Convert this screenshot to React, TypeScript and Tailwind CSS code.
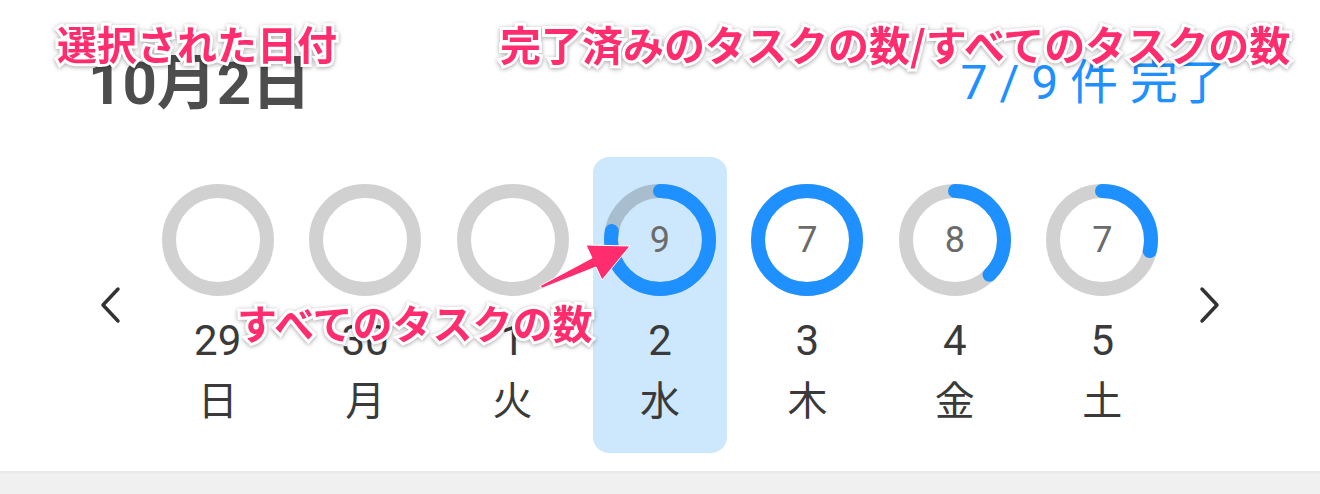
import React from "react";

type Day = {
  date: number;
  weekday: string;
  total: number;
  done: number;
  selected?: boolean;
};

const days: Day[] = [
  { date: 29, weekday: "日", total: 0, done: 0 },
  { date: 30, weekday: "月", total: 0, done: 0 },
  { date: 1, weekday: "火", total: 0, done: 0 },
  { date: 2, weekday: "水", total: 9, done: 7, selected: true },
  { date: 3, weekday: "木", total: 7, done: 7 },
  { date: 4, weekday: "金", total: 8, done: 3 },
  { date: 5, weekday: "土", total: 7, done: 2 },
];

const FONT = "[font-family:Roboto,'Noto_Sans_CJK_JP',sans-serif]";

function ProgressRing({ total, done }: { total: number; done: number }) {
  const r = 49;
  const c = 2 * Math.PI * r;
  const frac = total > 0 ? done / total : 0;
  return (
    <div className="relative h-[112px] w-[112px]">
      <svg width={112} height={112} viewBox="0 0 112 112" className="-rotate-90">
        <circle cx={56} cy={56} r={r} fill="none" stroke="rgba(0,0,0,0.18)" strokeWidth={14} />
        {frac > 0 && (
          <circle
            cx={56}
            cy={56}
            r={r}
            fill="none"
            stroke="#1e90ff"
            strokeWidth={14}
            strokeLinecap={frac >= 1 ? "butt" : "round"}
            strokeDasharray={`${frac * c} ${c}`}
          />
        )}
      </svg>
      {total > 0 && (
        <span className="absolute inset-0 flex items-center justify-center text-[36px] leading-none text-[#6b6b6b]">
          {total}
        </span>
      )}
    </div>
  );
}

function Chevron({ dir }: { dir: "left" | "right" }) {
  return (
    <svg width={24} height={40} viewBox="0 0 24 40" fill="none">
      <polyline
        points={dir === "left" ? "19,4 4,20 19,36" : "5,4 20,20 5,36"}
        stroke="#333"
        strokeWidth={3.5}
        strokeLinecap="round"
        strokeLinejoin="round"
      />
    </svg>
  );
}

const NOTE =
  "absolute whitespace-nowrap text-[40px] leading-none font-bold text-[#ff2d6e] [font-family:'Noto_Sans_CJK_JP',sans-serif] [-webkit-text-stroke:6px_white] [paint-order:stroke_fill] drop-shadow-[0_1px_2px_rgba(0,0,0,0.35)]";

export default function App() {
  return (
    <div className={`relative flex h-[494px] w-full flex-col bg-white ${FONT}`}>
      <div className="flex h-[471px] flex-col">
        <div className="flex items-start justify-between pl-[88px] pr-[94px] pt-[54px]">
          <div className="text-[60px] font-bold leading-none text-[#4d4d4d]">10月2日</div>
          <div className="mt-[5px] whitespace-pre text-[48px] leading-none text-[#1e90ff]">
            7 / 9 件 完了
          </div>
        </div>

        <div className="mt-[43px] flex items-center justify-center">
          <div className="flex w-[66px] justify-center">
            <Chevron dir="left" />
          </div>
          <div className="grid w-[1032px] grid-cols-7">
            {days.map((d) => (
              <div key={d.date} className="flex justify-center">
                <div
                  className={`flex w-[134px] flex-col items-center rounded-[16px] pt-[27px] pb-[31px] ${
                    d.selected ? "bg-[#cde8fc]" : ""
                  }`}
                >
                  <ProgressRing total={d.total} done={d.done} />
                  <div className="mt-[24px] h-[42px] text-[42px] leading-none text-[#3a3a3a]">
                    {d.date}
                  </div>
                  <div className="mt-[20px] h-[40px] text-[40px] leading-none text-[#3a3a3a]">
                    {d.weekday}
                  </div>
                </div>
              </div>
            ))}
          </div>
          <div className="flex w-[66px] justify-center">
            <Chevron dir="right" />
          </div>
        </div>
      </div>
      <div className="flex-1 border-t-[3px] border-[#ebebeb] bg-[#f0f0f0]" />

      {/* annotations */}
      <svg className="pointer-events-none absolute inset-0" width={1320} height={494}>
        <polygon
          points="540.4,285.6 592,258 586,245 630,246 602,280 596,267 541.6,288.4"
          fill="#ff2d6e"
          stroke="white"
          strokeWidth={1}
          strokeLinejoin="round"
        />
      </svg>
      <div className={`${NOTE} left-[57px] top-[23px]`}>選択された日付</div>
      <div className={`${NOTE} left-[500px] top-[23px] text-[41px]`}>
        完了済みのタスクの数/すべてのタスクの数
      </div>
      <div className={`${NOTE} left-[237px] top-[302px]`}>すべてのタスクの数</div>
    </div>
  );
}
